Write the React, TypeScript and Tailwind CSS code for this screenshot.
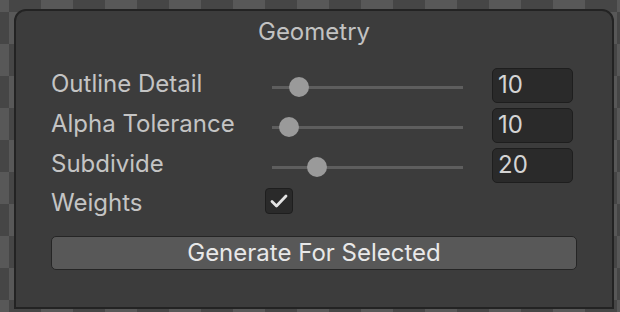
import React from 'react';

const font = { fontFamily: 'Inter, "Noto Sans", sans-serif' };

const sliders = [
  { label: 'Outline Detail', value: 10, thumb: 'left-[17px]' },
  { label: 'Alpha Tolerance', value: 10, thumb: 'left-[7px]' },
  { label: 'Subdivide', value: 20, thumb: 'left-[35px]' },
];

function SliderRow({ label, value, thumb }: { label: string; value: number; thumb: string }) {
  return (
    <div className="h-[40px] flex items-center pl-[35px]">
      <span className="w-[221px] text-[24px] leading-none text-[#c4c4c4] -mt-[2px]">{label}</span>
      <div className="relative w-[191px] h-[3px] mt-[4px] bg-[#5e5e5e]">
        <div className={`absolute ${thumb} top-[-9px] w-[20px] h-[20px] rounded-full bg-[#9a9a9a]`} />
      </div>
      <div className="ml-[29px] w-[81px] h-[35px] rounded-[5px] bg-[#2a2a2a] border border-[#1e1e1e] flex items-center pl-[5px] text-[24px] leading-none text-[#d4d4d4]">
        {value}
      </div>
    </div>
  );
}

export default function App() {
  return (
    <div
      className="w-[620px] h-[312px] pt-[9px] pl-[14px] overflow-hidden bg-[conic-gradient(#585858_0_25%,#464646_0_50%,#585858_0_75%,#464646_0)] bg-[length:64px_64px] bg-[position:9px_-20px]"
      style={font}
    >
      <section className="w-[600px] h-[300px] rounded-t-[12px] border-2 border-[#232323] bg-[#3c3c3c]">
        <div className="h-[42px] flex items-center justify-center text-[24px] leading-none text-[#c2c2c2]">Geometry</div>
        <div className="mt-[12px]">
          {sliders.map((s) => (
            <SliderRow key={s.label} {...s} />
          ))}
          <div className="h-[32px] flex items-center pl-[35px]">
            <span className="w-[214px] text-[24px] leading-none text-[#c4c4c4] mt-[4px]">Weights</span>
            <div className="w-[28px] h-[26px] rounded-[4px] bg-[#2a2a2a] border border-[#1e1e1e] flex items-center justify-center">
              <svg width="18" height="14" viewBox="0 0 18 14" fill="none">
                <path d="M2 7.5 L6.5 12 L16 2" stroke="#e4e4e4" strokeWidth="2.8" strokeLinecap="round" strokeLinejoin="round" />
              </svg>
            </div>
          </div>
        </div>
        <button className="mt-[19px] ml-[35px] w-[526px] h-[34px] rounded-[5px] bg-[#585858] border border-[#252525] text-[24px] leading-none text-[#e8e8e8]">
          Generate For Selected
        </button>
      </section>
    </div>
  );
}
